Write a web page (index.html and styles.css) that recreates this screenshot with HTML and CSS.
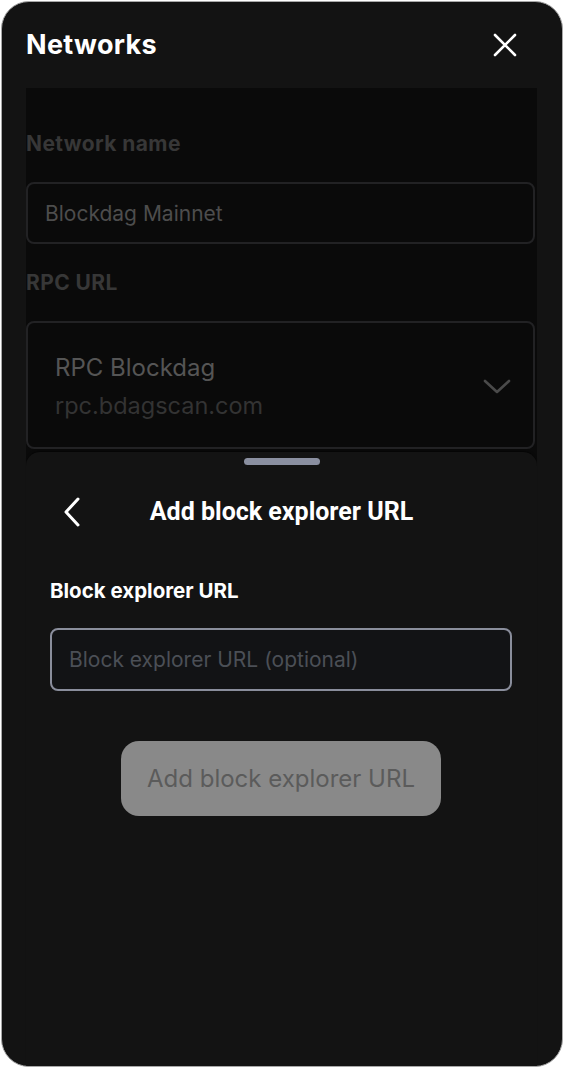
FILE: index.html
```html
<!DOCTYPE html>
<html lang="en">
<head>
<meta charset="utf-8">
<title>Networks</title>
<link rel="stylesheet" href="styles.css">
</head>
<body>
<div class="card">
  <header class="header">
    <h1 class="title">Networks</h1>
    <button class="close" aria-label="Close">
      <svg width="24" height="24" viewBox="0 0 24 24"><path d="M2 2 L22 22 M22 2 L2 22" stroke="#fff" stroke-width="2.6" stroke-linecap="round" fill="none"/></svg>
    </button>
  </header>
  <div class="stage">
    <div class="backdrop">
      <div class="label dim">Network name</div>
      <div class="field dim-field">Blockdag Mainnet</div>
      <div class="label dim">RPC URL</div>
      <div class="select dim-field">
        <div class="select-text">
          <div class="select-name">RPC Blockdag</div>
          <div class="select-url">rpc.bdagscan.com</div>
        </div>
        <svg class="chev" width="28" height="16" viewBox="0 0 28 16"><path d="M2 2 L14 13 L26 2" stroke="#4a4a4a" stroke-width="2.6" fill="none" stroke-linecap="round" stroke-linejoin="round"/></svg>
      </div>
    </div>
    <div class="sheet">
      <div class="handle"></div>
      <div class="sheet-head">
        <button class="back" aria-label="Back">
          <svg width="20" height="30" viewBox="0 0 20 30"><path d="M16 2 L4 15 L16 28" stroke="#fff" stroke-width="3" fill="none" stroke-linecap="round" stroke-linejoin="round"/></svg>
        </button>
        <div class="sheet-title">Add block explorer URL</div>
      </div>
      <div class="sheet-body">
        <div class="sheet-label">Block explorer URL</div>
        <div class="url-input">Block explorer URL (optional)</div>
        <div class="actions">
          <button class="submit">Add block explorer URL</button>
        </div>
      </div>
    </div>
  </div>
</div>
</body>
</html>
```
FILE: styles.css
```css
* { box-sizing: border-box; }
html, body { margin: 0; padding: 0; }
body {
  background: #ffffff;
  width: 564px;
  height: 1068px;
  padding: 1px;
  font-family: Inter, "Noto Sans", sans-serif;
}
.card {
  width: 562px;
  height: 1066px;
  background: #131313;
  border: 1px solid #a8a8a8;
  border-radius: 28px;
  overflow: hidden;
  display: flex;
  flex-direction: column;
}
.header {
  height: 86px;
  padding: 0 45px 0 24px;
  display: flex;
  align-items: center;
  justify-content: space-between;
  flex-shrink: 0;
}
.title {
  margin: 0;
  color: #ffffff;
  font-size: 27px;
  font-weight: 700;
  letter-spacing: 0.3px;
  padding-bottom: 2px;
}
.close {
  background: none;
  border: 0;
  padding: 0;
  width: 24px;
  height: 24px;
  display: flex;
}
.stage {
  flex: 1;
  display: flex;
  flex-direction: column;
  margin: 0 25px 0 24px;
}
.backdrop {
  background: #0a0a0a;
  height: 378px;
  flex-shrink: 0;
  padding: 45px 2px 0 0;
  display: flex;
  flex-direction: column;
}
.label {
  font-size: 21px;
  font-weight: 700;
  letter-spacing: 0.4px;
  height: 22px;
  line-height: 22px;
}
.dim { color: #373737; }
.dim-field {
  border: 2px solid #222224;
  border-radius: 8px;
}
.field {
  margin-top: 27px;
  height: 62px;
  display: flex;
  align-items: center;
  padding-left: 17px;
  font-size: 21px;
  color: #4d4d4d;
  margin-bottom: 28px;
}
.select {
  margin-top: 27px;
  height: 128px;
  display: flex;
  align-items: center;
  justify-content: space-between;
  padding: 4px 22px 0 27px;
}
.select-name {
  font-size: 24px;
  color: #555555;
  line-height: 30px;
}
.select-url {
  font-size: 23.5px;
  color: #333333;
  line-height: 30px;
  margin-top: 8px;
}
.sheet {
  flex: 1;
  margin-top: -14px;
  background: #131313;
  border-radius: 14px 14px 0 0;
  box-shadow: 0 -2px 2px -1px rgba(0,0,0,0.6);
  display: flex;
  flex-direction: column;
  align-items: stretch;
}
.handle {
  width: 76px;
  height: 7px;
  border-radius: 4px;
  background: #8a8fa0;
  margin: 6px auto 0;
}
.sheet-head {
  position: relative;
  height: 66px;
  margin-top: 14px;
  display: flex;
  align-items: center;
  justify-content: center;
}
.back {
  position: absolute;
  left: 36px;
  top: 50%;
  transform: translateY(-50%);
  background: none;
  border: 0;
  padding: 0;
  display: flex;
}
.sheet-title {
  font-family: Roboto, "Noto Sans", sans-serif;
  font-weight: 700;
  font-size: 25px;
  color: #ffffff;
  padding-bottom: 2px;
}
.sheet-body {
  padding: 0 25px 0 24px;
  display: flex;
  flex-direction: column;
}
.sheet-label {
  margin-top: 34px;
  font-size: 20.5px;
  font-weight: 700;
  color: #ffffff;
  line-height: 24px;
}
.url-input {
  margin-top: 25px;
  height: 63px;
  border: 2px solid #8a8e9c;
  border-radius: 8px;
  display: flex;
  align-items: center;
  padding-left: 17px;
  font-size: 21px;
  color: #4b4f56;
  background: #121315;
}
.actions {
  display: flex;
  justify-content: center;
  margin-top: 50px;
}
.submit {
  width: 320px;
  height: 75px;
  border: 0;
  border-radius: 18px;
  background: #898989;
  color: #5b5b5b;
  font-family: Inter, "Noto Sans", sans-serif;
  font-size: 24px;
  padding: 0;
}
```
